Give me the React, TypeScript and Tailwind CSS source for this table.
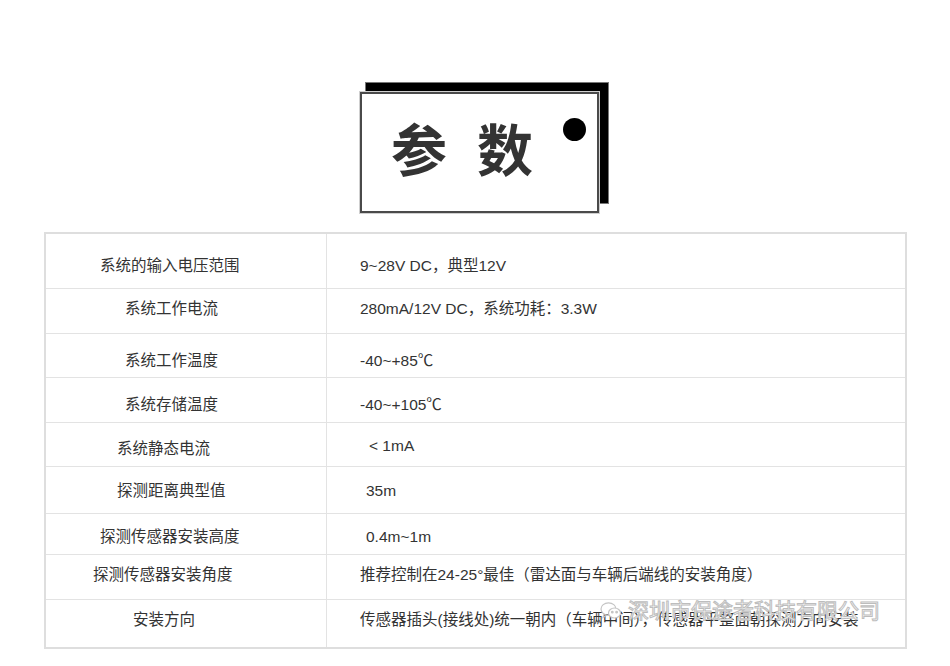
import * as React from "react";

// Spec rows: label, value, and per-row offsets taken from the reference
interface SpecRow {
  label: string;
  value: string;
  rowClass: string;
  labelClass: string;
  valueClass: string;
}

const rows: SpecRow[] = [
  {
    label: "系统的输入电压范围",
    value: "9~28V DC，典型12V",
    rowClass: "h-[55px]",
    labelClass: "pl-[54px] pt-[22px]",
    valueClass: "pl-[33px] pt-[22px]",
  },
  {
    label: "系统工作电流",
    value: "280mA/12V DC，系统功耗：3.3W",
    rowClass: "h-[45px]",
    labelClass: "pl-[79px] pt-[10px]",
    valueClass: "pl-[33px] pt-[10px]",
  },
  {
    label: "系统工作温度",
    value: "-40~+85℃",
    rowClass: "h-[44px]",
    labelClass: "pl-[79px] pt-[17px]",
    valueClass: "pl-[33px] pt-[17px]",
  },
  {
    label: "系统存储温度",
    value: "-40~+105℃",
    rowClass: "h-[45px]",
    labelClass: "pl-[79px] pt-[17px]",
    valueClass: "pl-[33px] pt-[17px]",
  },
  {
    label: "系统静态电流",
    value: "< 1mA",
    rowClass: "h-[44px]",
    labelClass: "pl-[71px] pt-[16px]",
    valueClass: "pl-[42px] pt-[13px]",
  },
  {
    label: "探测距离典型值",
    value: "35m",
    rowClass: "h-[47px]",
    labelClass: "pl-[71px] pt-[14px]",
    valueClass: "pl-[39px] pt-[14px]",
  },
  {
    label: "探测传感器安装高度",
    value: "0.4m~1m",
    rowClass: "h-[41px]",
    labelClass: "pl-[54px] pt-[13px]",
    valueClass: "pl-[39px] pt-[13px]",
  },
  {
    label: "探测传感器安装角度",
    value: "推荐控制在24-25°最佳（雷达面与车辆后端线的安装角度）",
    rowClass: "h-[45px]",
    labelClass: "pl-[47px] pt-[10px]",
    valueClass: "pl-[33px] pt-[10px]",
  },
  {
    label: "安装方向",
    value: "传感器插头(接线处)统一朝内（车辆中间），传感器平整面朝探测方向安装",
    rowClass: "h-[47px]",
    labelClass: "pl-[87px] pt-[10px]",
    valueClass: "pl-[33px] pt-[10px]",
  },
];

function TitleCard() {
  return (
    <div className="relative ml-[360px] h-[131px] w-[249px]">
      {/* black sheet behind the card */}
      <div className="absolute left-[5px] top-0 h-[122px] w-[244px] border border-[#777] bg-black" />
      <div className="absolute left-0 top-[10px] flex h-[121px] w-[239px] items-center border-2 border-[#4a4a4a] bg-white shadow-[0_0_0_1px_#cfcfcf]">
        <div className="flex gap-[30px] pb-[2px] pl-[29px] text-[56px] font-bold leading-none text-[#333]">
          <span>参</span>
          <span>数</span>
        </div>
        <span className="absolute left-[201px] top-[24px] h-[23px] w-[23px] rounded-full bg-black" />
      </div>
    </div>
  );
}

function Watermark() {
  return (
    <div className="pointer-events-none absolute left-[600px] top-[600px] flex items-center gap-[6px]">
      <svg width="22" height="20" viewBox="0 0 22 20" fill="none" stroke="#c4c4c4" strokeWidth="1.2">
        <ellipse cx="8.5" cy="8" rx="7.5" ry="6.2" />
        <path d="M4 13.2 L3 16.5 L6.8 14.2" />
        <ellipse cx="14.5" cy="12" rx="6" ry="5" fill="white" />
        <circle cx="12.3" cy="11.2" r="0.8" fill="#c4c4c4" />
        <circle cx="16.6" cy="11.2" r="0.8" fill="#c4c4c4" />
      </svg>
      <span className="text-[21px] leading-none text-white [-webkit-text-stroke:1px_#bdbdbd]">
        深圳市保途者科技有限公司
      </span>
    </div>
  );
}

export default function App() {
  return (
    <div className="relative h-[666px] w-[950px] overflow-hidden bg-white pt-[82px] font-['Liberation_Sans','Noto_Sans_CJK_SC',sans-serif] text-[15.5px] text-[#333]">
      <TitleCard />
      <div className="ml-[44px] mt-[19px] w-[863px] border-2 border-[#dedede]">
        {rows.map((row, i) => (
          <div
            key={i}
            className={`flex ${row.rowClass} ${i < rows.length - 1 ? "border-b border-[#e3e3e3]" : ""}`}
          >
            <div className={`w-[281px] shrink-0 border-r border-[#e3e3e3] leading-[20px] ${row.labelClass}`}>
              {row.label}
            </div>
            <div className={`flex-1 whitespace-nowrap leading-[20px] ${row.valueClass}`}>{row.value}</div>
          </div>
        ))}
      </div>
      <Watermark />
    </div>
  );
}
